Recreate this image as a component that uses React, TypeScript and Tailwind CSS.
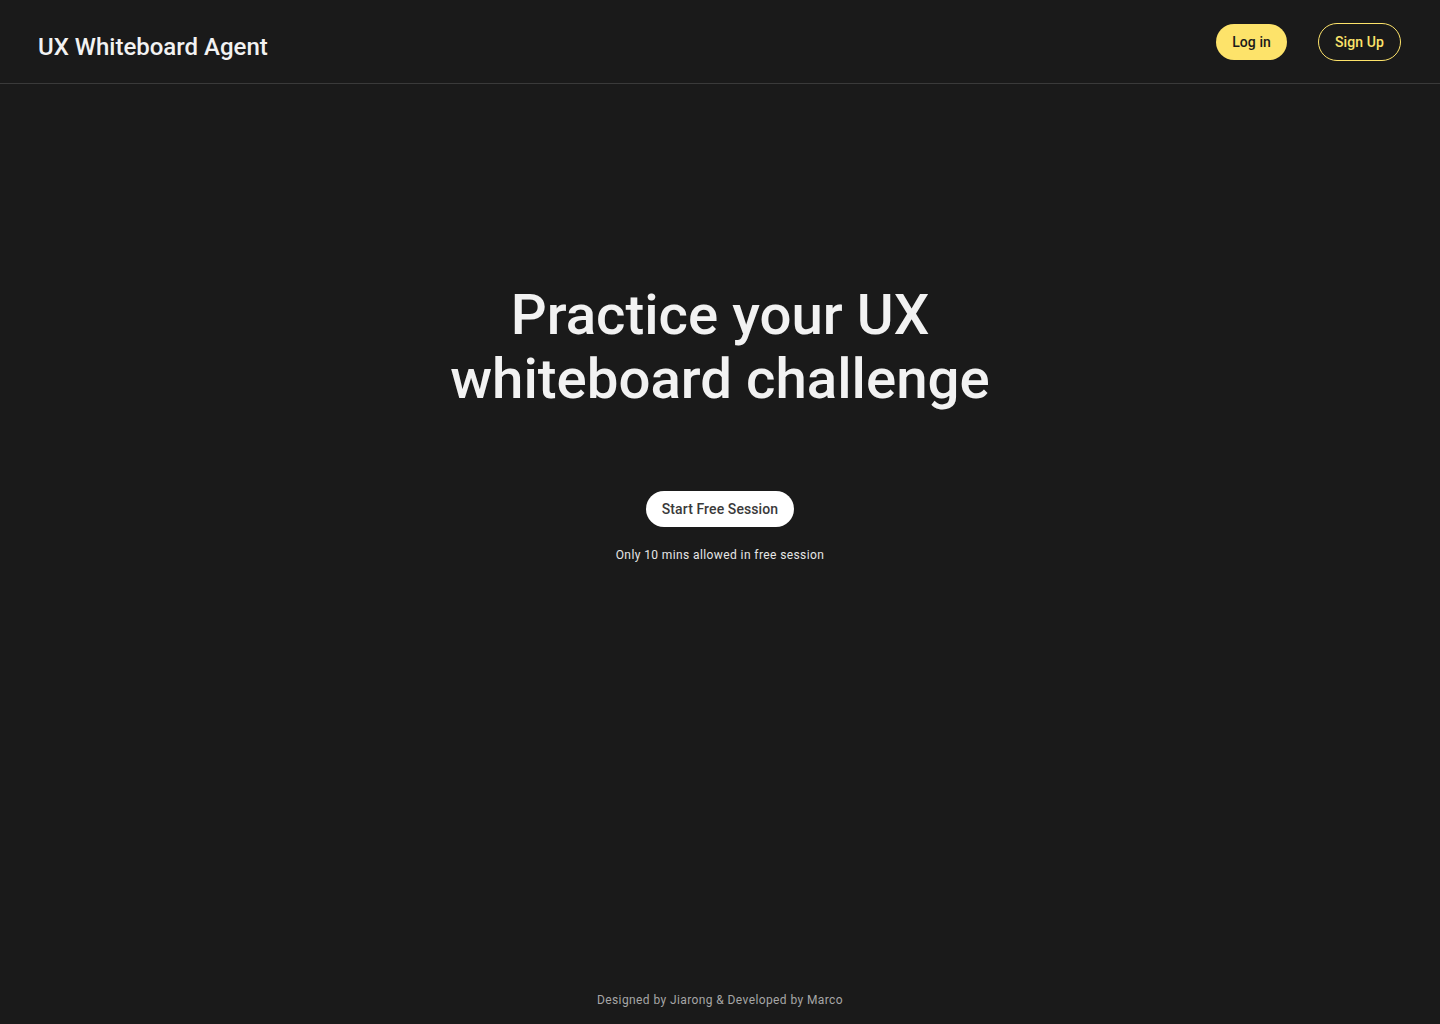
import React from "react";

export default function App() {
  return (
    <div className="min-h-screen w-full bg-[#1a1a1a] flex flex-col" style={{ fontFamily: "Roboto, 'Noto Sans', sans-serif" }}>
      <header className="h-[84px] border-b border-[#3a3a3a] flex items-center justify-between pl-[38px] pr-[39px]">
        <div className="pt-[10px] text-[24px] font-medium text-[#f2f2f2] leading-none">UX Whiteboard Agent</div>
        <div className="flex items-center gap-[31px]">
          <button className="h-[36px] px-4 pt-[1px] rounded-full bg-[#fde36a] text-[#1a1a1a] text-[14px] font-medium tracking-[0.1px]">Log in</button>
          <button className="h-[38px] px-4 pt-[1px] rounded-full border border-[#fde36a] text-[#fde36a] text-[14px] font-medium tracking-[0.1px]">Sign Up</button>
        </div>
      </header>
      <main className="flex-1 flex flex-col items-center">
        <h1 className="mt-[199px] text-center text-[56.4px] leading-[64px] font-medium text-[#f2f2f2]">
          Practice your UX
          <br />
          whiteboard challenge
        </h1>
        <button className="mt-[80px] h-[36px] px-4 rounded-full bg-white text-[#3a3a3a] text-[14px] font-medium tracking-[0.1px]">Start Free Session</button>
        <p className="mt-[19px] text-[12px] tracking-[0.4px] text-[#e6e6e6]">Only 10 mins allowed in free session</p>
      </main>
      <footer className="pb-[15px] text-center text-[12px] tracking-[0.4px] text-[#a6a6a6]">Designed by Jiarong &amp; Developed by Marco</footer>
    </div>
  );
}
